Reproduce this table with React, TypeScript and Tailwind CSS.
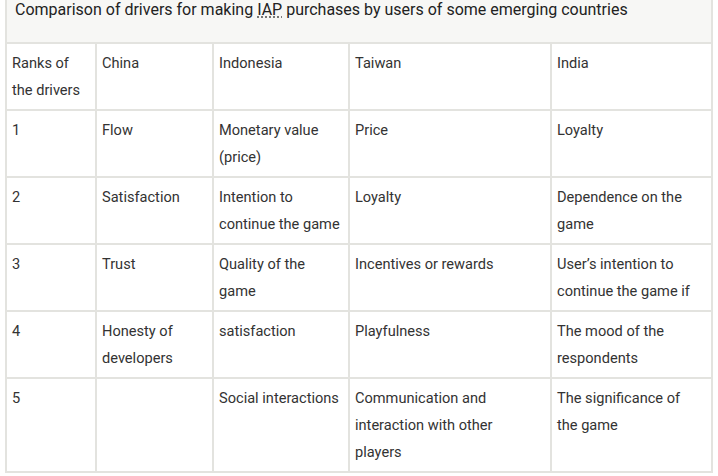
const rows: string[][] = [
  ["Ranks of the drivers", "China", "Indonesia", "Taiwan", "India"],
  ["1", "Flow", "Monetary value (price)", "Price", "Loyalty"],
  ["2", "Satisfaction", "Intention to continue the game", "Loyalty", "Dependence on the game"],
  ["3", "Trust", "Quality of the game", "Incentives or rewards", "User’s intention to continue the game if"],
  ["4", "Honesty of developers", "satisfaction", "Playfulness", "The mood of the respondents"],
  ["5", "", "Social interactions", "Communication and interaction with other players", "The significance of the game"],
];

const widths = ["w-[90px]", "w-[117px]", "w-[136px]", "w-[202px]", "w-[161px]"];
// right padding per column
const padR = ["pr-[8px]", "pr-[8px]", "pr-[5px]", "pr-[12px]", "pr-[10px]"];

export default function App() {
  return (
    <div className="w-[718px] h-[476px] bg-white overflow-hidden font-['Roboto',sans-serif] text-[#333]">
      <table className="ml-[5px] w-[706px] table-fixed border-collapse">
        <caption className="h-[42px] bg-[#f7f7f5] border-x-2 border-[#e3e3df] pl-[8px] pr-[10px] text-left align-top text-[16px] leading-[20px] text-[#222]">
          Comparison of drivers for making{" "}
          <abbr className="underline decoration-dotted decoration-[#555] underline-offset-2">IAP</abbr>{" "}
          purchases by users of some emerging countries
        </caption>
        <colgroup>
          {widths.map((w) => (
            <col key={w} className={w} />
          ))}
        </colgroup>
        <tbody>
          {rows.map((r, i) => (
            <tr key={i}>
              {r.map((c, j) => (
                <td
                  key={j}
                  className={`border-2 border-[#e3e3df] pl-[5px] pt-[6px] pb-[5px] align-top text-[14.6px] leading-[27px] ${padR[j]}`}
                >
                  {c}
                </td>
              ))}
            </tr>
          ))}
        </tbody>
      </table>
    </div>
  );
}
